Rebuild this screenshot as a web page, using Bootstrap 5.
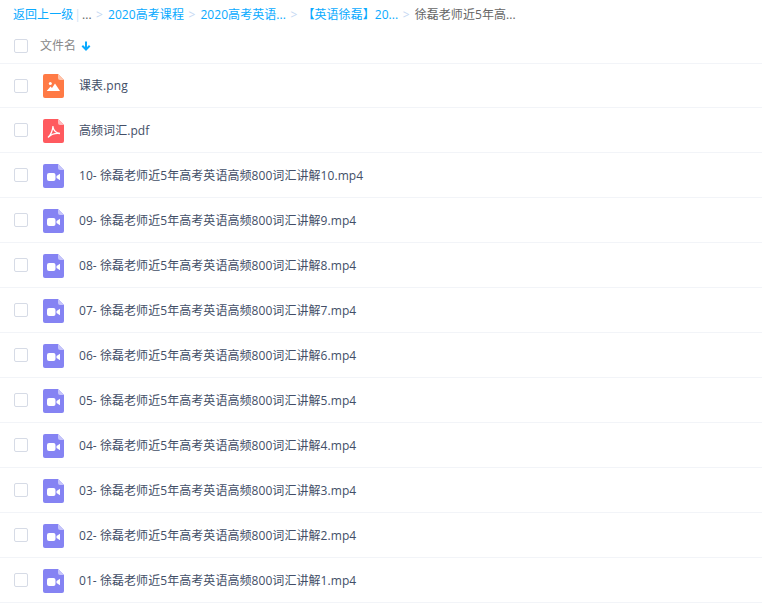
<!DOCTYPE html>
<html lang="zh"><head><meta charset="utf-8"><title>文件列表</title>
<link href="https://cdn.jsdelivr.net/npm/bootstrap@5.3.0/dist/css/bootstrap.min.css" rel="stylesheet">
<style>
html,body{height:603px;overflow:hidden}
body{background:#fff;font-family:"Open Sans","Noto Sans CJK SC",sans-serif;font-size:12px;color:#424e67}
.crumbs{height:28px;padding-left:13px;padding-top:2px;color:#666;white-space:nowrap;letter-spacing:.06px}
.crumbs a{color:#09aaff;text-decoration:none}
.crumbs .sep{color:#c5d8f3;margin:0 5px 0 4.5px}
.crumbs .bar{color:#cfe3f5;margin:0 1px}
.headrow{height:36px;border-bottom:1px solid #f2f4f8;color:#888}
.filerow{height:45px;border-bottom:1px solid #f2f4f8}
.filerow.first{height:44px}
.tick{width:14px;height:14px;border:1px solid #d6dbe6;border-radius:2px;margin-left:14px;flex:none}
.ficon{width:21px;height:24px;margin-left:15px;margin-top:2px;flex:none;display:block}
.fname{margin-left:15px;margin-top:2px;white-space:nowrap;letter-spacing:.06px}
.first .fname{margin-top:0}
.first .ficon{margin-top:1px}
.hname{margin-left:12px}
</style></head><body>
<nav class="crumbs d-flex align-items-center">
<a href="#">返回上一级</a><span class="bar">|</span><span>...</span><span class="sep">&gt;</span><a href="#">2020高考课程</a><span class="sep">&gt;</span><a href="#">2020高考英语...</a><span class="sep">&gt;</span><a href="#">【英语徐磊】20...</a><span class="sep">&gt;</span><span>徐磊老师近5年高...</span>
</nav>
<div class="headrow d-flex align-items-center">
<span class="tick"></span><span class="hname">文件名</span>
<svg class="ms-1" width="12" height="12" viewBox="0 0 12 12"><path d="M6 1.500v8M2.300 5.800 6 9.500l3.700-3.700" fill="none" stroke="#09aaff" stroke-width="2"/></svg>
</div>
<div class="filerow first d-flex align-items-center"><span class="tick"></span>
<svg class="ficon" viewBox="0 0 21 24"><path d="M2 0h13l6 6v16a2 2 0 0 1-2 2H2a2 2 0 0 1-2-2V2a2 2 0 0 1 2-2z" fill="#ff7a45"/><path d="M15 0l6 6h-4a2 2 0 0 1-2-2z" fill="#ffc4ab"/><circle cx="7.300" cy="9.500" r="1.500" fill="#fff"/><path d="M3.700 17l3.800-4.500 1.500 1.500 3-4.500 5 7.500z" fill="#fff"/></svg>
<span class="fname">课表.png</span></div>
<div class="filerow d-flex align-items-center"><span class="tick"></span>
<svg class="ficon" viewBox="0 0 21 24"><path d="M2 0h13l6 6v16a2 2 0 0 1-2 2H2a2 2 0 0 1-2-2V2a2 2 0 0 1 2-2z" fill="#ff5a5f"/><path d="M15 0l6 6h-4a2 2 0 0 1-2-2z" fill="#ffbcbe"/><path d="M10 7c-.3 4-2 8.500-5 11.500M5.500 18c3-3 7-4 11.500-3.500M10 8c.5 3 3 6 7 6.500" fill="none" stroke="#fff" stroke-width="1.300"/></svg>
<span class="fname">高频词汇.pdf</span></div>
<div class="filerow d-flex align-items-center"><span class="tick"></span><svg class="ficon" viewBox="0 0 21 24"><path d="M2 0h13l6 6v16a2 2 0 0 1-2 2H2a2 2 0 0 1-2-2V2a2 2 0 0 1 2-2z" fill="#8583f3"/><path d="M15 0l6 6h-4a2 2 0 0 1-2-2z" fill="#c6c5fb"/><rect x="4" y="9" width="8.500" height="8" rx="2" fill="#fff"/><path d="M13.500 12l3.500-2.300v6.600l-3.500-2.300z" fill="#fff"/></svg><span class="fname">10- 徐磊老师近5年高考英语高频800词汇讲解10.mp4</span></div>
<div class="filerow d-flex align-items-center"><span class="tick"></span><svg class="ficon" viewBox="0 0 21 24"><path d="M2 0h13l6 6v16a2 2 0 0 1-2 2H2a2 2 0 0 1-2-2V2a2 2 0 0 1 2-2z" fill="#8583f3"/><path d="M15 0l6 6h-4a2 2 0 0 1-2-2z" fill="#c6c5fb"/><rect x="4" y="9" width="8.500" height="8" rx="2" fill="#fff"/><path d="M13.500 12l3.500-2.300v6.600l-3.500-2.300z" fill="#fff"/></svg><span class="fname">09- 徐磊老师近5年高考英语高频800词汇讲解9.mp4</span></div>
<div class="filerow d-flex align-items-center"><span class="tick"></span><svg class="ficon" viewBox="0 0 21 24"><path d="M2 0h13l6 6v16a2 2 0 0 1-2 2H2a2 2 0 0 1-2-2V2a2 2 0 0 1 2-2z" fill="#8583f3"/><path d="M15 0l6 6h-4a2 2 0 0 1-2-2z" fill="#c6c5fb"/><rect x="4" y="9" width="8.500" height="8" rx="2" fill="#fff"/><path d="M13.500 12l3.500-2.300v6.600l-3.500-2.300z" fill="#fff"/></svg><span class="fname">08- 徐磊老师近5年高考英语高频800词汇讲解8.mp4</span></div>
<div class="filerow d-flex align-items-center"><span class="tick"></span><svg class="ficon" viewBox="0 0 21 24"><path d="M2 0h13l6 6v16a2 2 0 0 1-2 2H2a2 2 0 0 1-2-2V2a2 2 0 0 1 2-2z" fill="#8583f3"/><path d="M15 0l6 6h-4a2 2 0 0 1-2-2z" fill="#c6c5fb"/><rect x="4" y="9" width="8.500" height="8" rx="2" fill="#fff"/><path d="M13.500 12l3.500-2.300v6.600l-3.500-2.300z" fill="#fff"/></svg><span class="fname">07- 徐磊老师近5年高考英语高频800词汇讲解7.mp4</span></div>
<div class="filerow d-flex align-items-center"><span class="tick"></span><svg class="ficon" viewBox="0 0 21 24"><path d="M2 0h13l6 6v16a2 2 0 0 1-2 2H2a2 2 0 0 1-2-2V2a2 2 0 0 1 2-2z" fill="#8583f3"/><path d="M15 0l6 6h-4a2 2 0 0 1-2-2z" fill="#c6c5fb"/><rect x="4" y="9" width="8.500" height="8" rx="2" fill="#fff"/><path d="M13.500 12l3.500-2.300v6.600l-3.500-2.300z" fill="#fff"/></svg><span class="fname">06- 徐磊老师近5年高考英语高频800词汇讲解6.mp4</span></div>
<div class="filerow d-flex align-items-center"><span class="tick"></span><svg class="ficon" viewBox="0 0 21 24"><path d="M2 0h13l6 6v16a2 2 0 0 1-2 2H2a2 2 0 0 1-2-2V2a2 2 0 0 1 2-2z" fill="#8583f3"/><path d="M15 0l6 6h-4a2 2 0 0 1-2-2z" fill="#c6c5fb"/><rect x="4" y="9" width="8.500" height="8" rx="2" fill="#fff"/><path d="M13.500 12l3.500-2.300v6.600l-3.500-2.300z" fill="#fff"/></svg><span class="fname">05- 徐磊老师近5年高考英语高频800词汇讲解5.mp4</span></div>
<div class="filerow d-flex align-items-center"><span class="tick"></span><svg class="ficon" viewBox="0 0 21 24"><path d="M2 0h13l6 6v16a2 2 0 0 1-2 2H2a2 2 0 0 1-2-2V2a2 2 0 0 1 2-2z" fill="#8583f3"/><path d="M15 0l6 6h-4a2 2 0 0 1-2-2z" fill="#c6c5fb"/><rect x="4" y="9" width="8.500" height="8" rx="2" fill="#fff"/><path d="M13.500 12l3.500-2.300v6.600l-3.500-2.300z" fill="#fff"/></svg><span class="fname">04- 徐磊老师近5年高考英语高频800词汇讲解4.mp4</span></div>
<div class="filerow d-flex align-items-center"><span class="tick"></span><svg class="ficon" viewBox="0 0 21 24"><path d="M2 0h13l6 6v16a2 2 0 0 1-2 2H2a2 2 0 0 1-2-2V2a2 2 0 0 1 2-2z" fill="#8583f3"/><path d="M15 0l6 6h-4a2 2 0 0 1-2-2z" fill="#c6c5fb"/><rect x="4" y="9" width="8.500" height="8" rx="2" fill="#fff"/><path d="M13.500 12l3.500-2.300v6.600l-3.500-2.300z" fill="#fff"/></svg><span class="fname">03- 徐磊老师近5年高考英语高频800词汇讲解3.mp4</span></div>
<div class="filerow d-flex align-items-center"><span class="tick"></span><svg class="ficon" viewBox="0 0 21 24"><path d="M2 0h13l6 6v16a2 2 0 0 1-2 2H2a2 2 0 0 1-2-2V2a2 2 0 0 1 2-2z" fill="#8583f3"/><path d="M15 0l6 6h-4a2 2 0 0 1-2-2z" fill="#c6c5fb"/><rect x="4" y="9" width="8.500" height="8" rx="2" fill="#fff"/><path d="M13.500 12l3.500-2.300v6.600l-3.500-2.300z" fill="#fff"/></svg><span class="fname">02- 徐磊老师近5年高考英语高频800词汇讲解2.mp4</span></div>
<div class="filerow d-flex align-items-center"><span class="tick"></span><svg class="ficon" viewBox="0 0 21 24"><path d="M2 0h13l6 6v16a2 2 0 0 1-2 2H2a2 2 0 0 1-2-2V2a2 2 0 0 1 2-2z" fill="#8583f3"/><path d="M15 0l6 6h-4a2 2 0 0 1-2-2z" fill="#c6c5fb"/><rect x="4" y="9" width="8.500" height="8" rx="2" fill="#fff"/><path d="M13.500 12l3.500-2.300v6.600l-3.500-2.300z" fill="#fff"/></svg><span class="fname">01- 徐磊老师近5年高考英语高频800词汇讲解1.mp4</span></div>
</body></html>
